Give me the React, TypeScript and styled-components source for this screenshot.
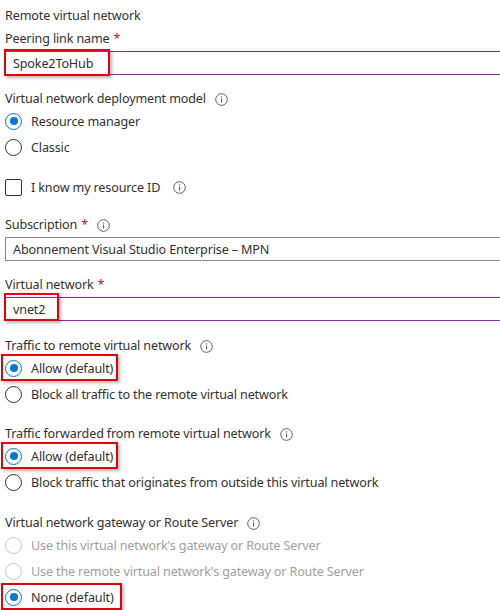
import React from "react";
import styled, { createGlobalStyle } from "styled-components";

const Global = createGlobalStyle`
  html, body { margin: 0; padding: 0; background: #fff; }
  body { overflow: hidden; width: 500px; height: 610px; }
  * { box-sizing: border-box; }
`;

const Page = styled.div`
  width: 500px;
  height: 610px;
  overflow: hidden;
  padding-left: 5px;
  display: flex;
  flex-direction: column;
  font-family: "Noto Sans", "Open Sans", sans-serif;
  font-size: 12.6px;
  letter-spacing: -0.15px;
  color: #323130;
`;

const Title = styled.div<{ $mt?: number }>`
  height: 18px;
  line-height: 18px;
  margin-top: ${(p) => p.$mt ?? 0}px;
  white-space: nowrap;
`;

const Label = styled.div<{ $mt?: number }>`
  height: 18px;
  line-height: 18px;
  margin-top: ${(p) => p.$mt ?? 0}px;
  display: flex;
  align-items: center;
  white-space: nowrap;
`;

const Required = styled.span`
  color: #a4262c;
  margin-left: 4px;
`;

const InfoWrap = styled.span<{ $ml?: number }>`
  display: inline-flex;
  margin-left: ${(p) => p.$ml ?? 9}px;
`;

const Info = ({ ml }: { ml?: number }) => (
  <InfoWrap $ml={ml}>
    <svg width="13" height="13" viewBox="0 0 13 13">
      <circle cx="6.5" cy="6.5" r="5.8" fill="none" stroke="#605e5c" strokeWidth="1" />
      <rect x="6" y="5.5" width="1.1" height="4" fill="#605e5c" />
      <circle cx="6.55" cy="3.9" r="0.7" fill="#605e5c" />
    </svg>
  </InfoWrap>
);

const FieldWrap = styled.div<{ $mt?: number }>`
  position: relative;
  margin-top: ${(p) => p.$mt ?? 0}px;
  width: 520px;
`;

const TextInput = styled.div<{ $tone: "focus" | "plain" }>`
  height: 24px;
  display: flex;
  align-items: center;
  padding-left: 7px;
  border: 1px solid ${(p) => (p.$tone === "focus" ? "#8a2aa6" : "#8a8886")};
  white-space: nowrap;
`;

const Highlight = styled.span<{ $l: number; $t: number; $w: number; $h: number }>`
  position: absolute;
  left: ${(p) => p.$l}px;
  top: ${(p) => p.$t}px;
  width: ${(p) => p.$w}px;
  height: ${(p) => p.$h}px;
  border: 2px solid #e3000b;
  box-shadow: 2px 2px 3px rgba(0, 0, 0, 0.28);
  pointer-events: none;
`;

const Group = styled.div<{ $mt?: number }>`
  display: flex;
  flex-direction: column;
  margin-top: ${(p) => p.$mt ?? 0}px;
`;

const OptionRow = styled.div<{ $disabled?: boolean }>`
  position: relative;
  height: 26px;
  display: flex;
  align-items: center;
  gap: 9px;
  white-space: nowrap;
  color: ${(p) => (p.$disabled ? "#a19f9d" : "#323130")};
`;

const RadioCircle = styled.span<{ $checked?: boolean; $disabled?: boolean }>`
  width: 17px;
  height: 17px;
  border-radius: 50%;
  flex: none;
  border: 1px solid
    ${(p) => (p.$disabled ? "#c8c6c4" : p.$checked ? "#0078d4" : "#323130")};
  display: flex;
  align-items: center;
  justify-content: center;
  &::after {
    content: "";
    width: 8px;
    height: 8px;
    border-radius: 50%;
    background: #0078d4;
    display: ${(p) => (p.$checked ? "block" : "none")};
  }
`;

const CheckBox = styled.span`
  width: 17px;
  height: 17px;
  flex: none;
  border: 1px solid #323130;
  border-radius: 2px;
`;

type Opt = { text: string; checked?: boolean; disabled?: boolean; hl?: number };

const Radio = ({ text, checked, disabled, hl }: Opt) => (
  <OptionRow $disabled={disabled}>
    <RadioCircle $checked={checked} $disabled={disabled} />
    {text}
    {hl ? <Highlight $l={-4} $t={-1} $w={hl} $h={27} /> : null}
  </OptionRow>
);

export default function App() {
  return (
    <Page>
      <Global />
      <Title $mt={7}>Remote virtual network</Title>
      <Label $mt={5}>
        Peering link name<Required>*</Required>
      </Label>
      <FieldWrap $mt={3}>
        <TextInput $tone="focus">Spoke2ToHub</TextInput>
        <Highlight $l={-1} $t={-2} $w={106} $h={27} />
      </FieldWrap>

      <Group $mt={15}>
        <Label>
          Virtual network deployment model
          <Info />
        </Label>
        <Radio text="Resource manager" checked />
        <Radio text="Classic" />
      </Group>

      <Group $mt={14}>
        <OptionRow>
          <CheckBox />
          I know my resource ID
          <Info ml={4} />
        </OptionRow>
      </Group>

      <Label $mt={16}>
        Subscription<Required>*</Required>
        <Info />
      </Label>
      <FieldWrap $mt={3}>
        <TextInput $tone="plain">
          Abonnement Visual Studio Enterprise – MPN
        </TextInput>
      </FieldWrap>

      <Label $mt={15}>
        Virtual network<Required>*</Required>
      </Label>
      <FieldWrap $mt={3}>
        <TextInput $tone="focus">vnet2</TextInput>
        <Highlight $l={-1} $t={-4} $w={55} $h={28} />
      </FieldWrap>

      <Group $mt={16}>
        <Label>
          Traffic to remote virtual network
          <Info />
        </Label>
        <Radio text="Allow (default)" checked hl={117} />
        <Radio text="Block all traffic to the remote virtual network" />
      </Group>

      <Group $mt={18}>
        <Label>
          Traffic forwarded from remote virtual network
          <Info />
        </Label>
        <Radio text="Allow (default)" checked hl={117} />
        <Radio text="Block traffic that originates from outside this virtual network" />
      </Group>

      <Group $mt={19}>
        <Label>
          Virtual network gateway or Route Server
          <Info />
        </Label>
        <Radio text="Use this virtual network's gateway or Route Server" disabled />
        <Radio text="Use the remote virtual network's gateway or Route Server" disabled />
        <Radio text="None (default)" checked hl={121} />
      </Group>
    </Page>
  );
}
